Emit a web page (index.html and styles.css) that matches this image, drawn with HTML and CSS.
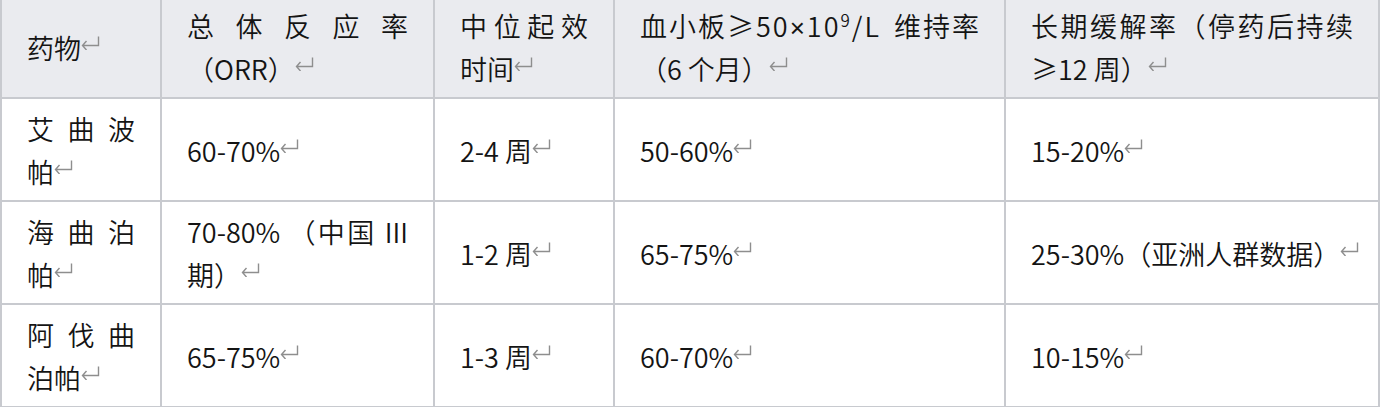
FILE: index.html
```html
<!DOCTYPE html>
<html lang="zh-CN">
<head>
<meta charset="utf-8">
<title>药物疗效对比</title>
<link rel="stylesheet" href="styles.css">
</head>
<body>
<table class="grid">
  <colgroup>
    <col class="c1"><col class="c2"><col class="c3"><col class="c4"><col class="c5">
  </colgroup>
  <thead>
    <tr>
      <th>药物<svg class="rm" viewBox="0 0 19 14" width="19" height="14"><path d="M17.5 0.5V9.5H1.5M5.5 5L1.5 9.5L5.5 14"/></svg></th>
      <th><span class="lj">总体反应率</span>（ORR）<svg class="rm" viewBox="0 0 19 14" width="19" height="14"><path d="M17.5 0.5V9.5H1.5M5.5 5L1.5 9.5L5.5 14"/></svg></th>
      <th><span class="lj">中位起效</span>时间<svg class="rm" viewBox="0 0 19 14" width="19" height="14"><path d="M17.5 0.5V9.5H1.5M5.5 5L1.5 9.5L5.5 14"/></svg></th>
      <th><span class="split"><span class="spread">血小板≥50<span class="times">×</span>10<sup class="sup">9</sup>/L</span><span class="spread tail">维持率</span></span>（6 个月）<svg class="rm" viewBox="0 0 19 14" width="19" height="14"><path d="M17.5 0.5V9.5H1.5M5.5 5L1.5 9.5L5.5 14"/></svg></th>
      <th><span class="lj">长期缓解率（停药后持续</span>≥12 周）<svg class="rm" viewBox="0 0 19 14" width="19" height="14"><path d="M17.5 0.5V9.5H1.5M5.5 5L1.5 9.5L5.5 14"/></svg></th>
    </tr>
  </thead>
  <tbody>
    <tr>
      <td><span class="lj">艾曲波</span>帕<svg class="rm" viewBox="0 0 19 14" width="19" height="14"><path d="M17.5 0.5V9.5H1.5M5.5 5L1.5 9.5L5.5 14"/></svg></td>
      <td>60-70%<svg class="rm" viewBox="0 0 19 14" width="19" height="14"><path d="M17.5 0.5V9.5H1.5M5.5 5L1.5 9.5L5.5 14"/></svg></td>
      <td>2-4 周<svg class="rm" viewBox="0 0 19 14" width="19" height="14"><path d="M17.5 0.5V9.5H1.5M5.5 5L1.5 9.5L5.5 14"/></svg></td>
      <td>50-60%<svg class="rm" viewBox="0 0 19 14" width="19" height="14"><path d="M17.5 0.5V9.5H1.5M5.5 5L1.5 9.5L5.5 14"/></svg></td>
      <td>15-20%<svg class="rm" viewBox="0 0 19 14" width="19" height="14"><path d="M17.5 0.5V9.5H1.5M5.5 5L1.5 9.5L5.5 14"/></svg></td>
    </tr>
    <tr>
      <td><span class="lj">海曲泊</span>帕<svg class="rm" viewBox="0 0 19 14" width="19" height="14"><path d="M17.5 0.5V9.5H1.5M5.5 5L1.5 9.5L5.5 14"/></svg></td>
      <td><span class="lj">70-80% （中国 III</span>期）<svg class="rm" viewBox="0 0 19 14" width="19" height="14"><path d="M17.5 0.5V9.5H1.5M5.5 5L1.5 9.5L5.5 14"/></svg></td>
      <td>1-2 周<svg class="rm" viewBox="0 0 19 14" width="19" height="14"><path d="M17.5 0.5V9.5H1.5M5.5 5L1.5 9.5L5.5 14"/></svg></td>
      <td>65-75%<svg class="rm" viewBox="0 0 19 14" width="19" height="14"><path d="M17.5 0.5V9.5H1.5M5.5 5L1.5 9.5L5.5 14"/></svg></td>
      <td class="nowrap">25-30%（亚洲人群数据）<svg class="rm hang" viewBox="0 0 19 14" width="19" height="14"><path d="M17.5 0.5V9.5H1.5M5.5 5L1.5 9.5L5.5 14"/></svg></td>
    </tr>
    <tr>
      <td><span class="lj">阿伐曲</span>泊帕<svg class="rm" viewBox="0 0 19 14" width="19" height="14"><path d="M17.5 0.5V9.5H1.5M5.5 5L1.5 9.5L5.5 14"/></svg></td>
      <td>65-75%<svg class="rm" viewBox="0 0 19 14" width="19" height="14"><path d="M17.5 0.5V9.5H1.5M5.5 5L1.5 9.5L5.5 14"/></svg></td>
      <td>1-3 周<svg class="rm" viewBox="0 0 19 14" width="19" height="14"><path d="M17.5 0.5V9.5H1.5M5.5 5L1.5 9.5L5.5 14"/></svg></td>
      <td>60-70%<svg class="rm" viewBox="0 0 19 14" width="19" height="14"><path d="M17.5 0.5V9.5H1.5M5.5 5L1.5 9.5L5.5 14"/></svg></td>
      <td>10-15%<svg class="rm" viewBox="0 0 19 14" width="19" height="14"><path d="M17.5 0.5V9.5H1.5M5.5 5L1.5 9.5L5.5 14"/></svg></td>
    </tr>
  </tbody>
</table>
</body>
</html>
```

FILE: styles.css
```css
html, body {
  margin: 0;
  padding: 0;
  background: #ffffff;
}

body {
  font-family: "Noto Sans CJK SC", "Noto Sans", sans-serif;
  color: #141414;
  overflow: hidden;
}

.grid {
  border-collapse: collapse;
  table-layout: fixed;
  width: 1378px;
  margin-top: -6px;
  font-size: 27px;
  line-height: 43px;
}

.c1 { width: 160px; }
.c2 { width: 273px; }
.c3 { width: 180px; }
.c4 { width: 391px; }
.c5 { width: 374px; }

.grid th,
.grid td {
  border: 2px solid #c8cacf;
  padding: 8px 25px 7px;
  text-align: left;
  vertical-align: middle;
  font-weight: 350;
}

.grid thead th {
  background: #eaebef;
}

.lj {
  display: block;
  text-align: justify;
  text-align-last: justify;
}

.split {
  display: flex;
  justify-content: space-between;
}

.spread {
  letter-spacing: 2px;
}

.tail {
  margin-right: -2px;
}

.times {
  font-family: "Liberation Sans", sans-serif;
  font-size: 26px;
  line-height: 1;
}

.sup {
  font-size: 17px;
  line-height: 0;
  vertical-align: 10px;
}

.nowrap {
  white-space: nowrap;
}

.rm {
  display: inline-block;
  width: 19px;
  height: 14px;
  vertical-align: 9px;
  fill: none;
  stroke: #8e8e8e;
  stroke-width: 1.4;
}

.hang {
  margin-right: -20px;
}
```
